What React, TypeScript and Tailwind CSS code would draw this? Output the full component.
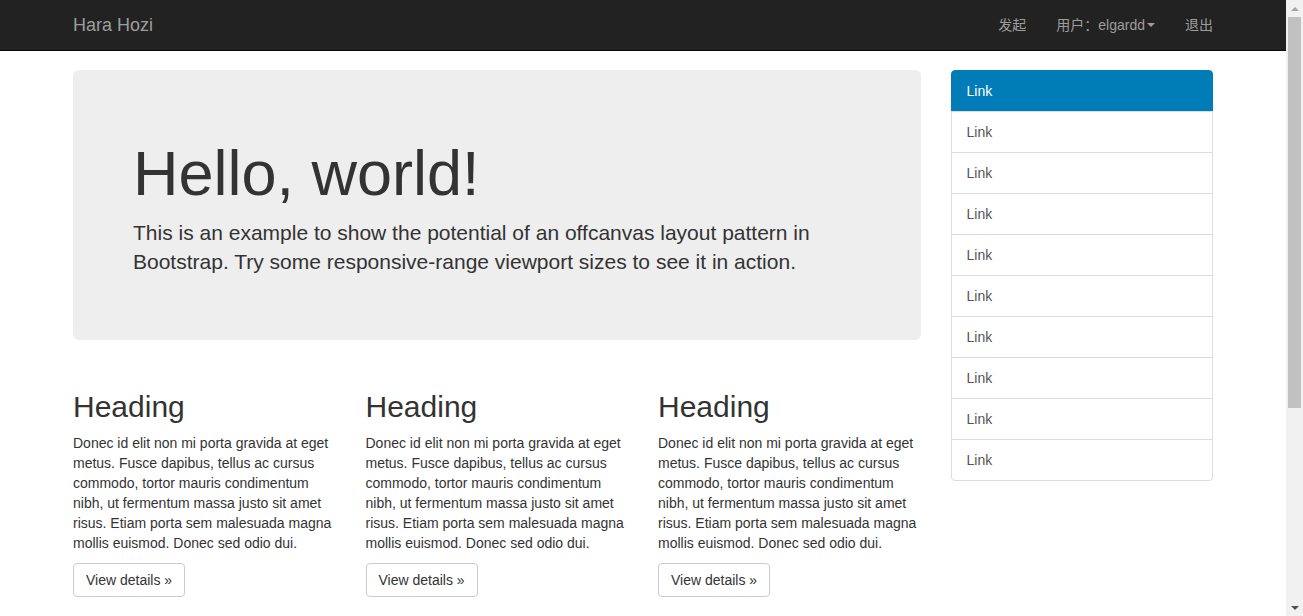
const features = [0, 1, 2];
const links = ['Link', 'Link', 'Link', 'Link', 'Link', 'Link', 'Link', 'Link', 'Link', 'Link'];

const body =
  'Donec id elit non mi porta gravida at eget metus. Fusce dapibus, tellus ac cursus commodo, tortor mauris condimentum nibh, ut fermentum massa justo sit amet risus. Etiam porta sem malesuada magna mollis euismod. Donec sed odio dui.';

function Navbar() {
  return (
    <nav className="h-[51px] bg-[#222] border-b border-[#080808]">
      <div className="w-[1170px] mx-auto px-[15px] flex items-start justify-between">
        <a className="-ml-[15px] px-[15px] py-[15px] text-[18px] leading-5 text-[#9d9d9d]">Hara Hozi</a>
        <ul className="flex -mr-[15px] text-[14px] leading-5 text-[#9d9d9d]">
          <li className="px-[15px] py-[15px]">发起</li>
          <li className="px-[15px] py-[15px] flex items-center">
            用户：elgardd
            <span className="inline-block w-0 h-0 ml-[2px] border-t-4 border-x-4 border-x-transparent border-t-[#9d9d9d]"></span>
          </li>
          <li className="px-[15px] py-[15px]">退出</li>
        </ul>
      </div>
    </nav>
  );
}

function Feature() {
  return (
    <div className="px-[15px]">
      <h2 className="mt-5 mb-[10px] text-[30px] leading-[1.1] text-[#333]">Heading</h2>
      <p className="text-[14px] leading-5 mb-[10px] text-[#333]">{body}</p>
      <p className="mb-[10px]">
        <a className="inline-block bg-white border border-[#ccc] rounded px-3 py-[6px] text-[14px] leading-5 text-[#333]">
          View details »
        </a>
      </p>
    </div>
  );
}

function Sidebar() {
  return (
    <div className="w-[292.5px] px-[15px]">
      <div className="flex flex-col">
        {links.map((l, i) => (
          <a
            key={i}
            className={
              i === 0
                ? 'block px-[15px] py-[10px] -mb-px text-[14px] leading-5 bg-[#007cb7] border border-[#007cb7] text-white rounded-t'
                : i === links.length - 1
                ? 'block px-[15px] py-[10px] text-[14px] leading-5 bg-white border border-[#ddd] text-[#555] rounded-b'
                : 'block px-[15px] py-[10px] -mb-px text-[14px] leading-5 bg-white border border-[#ddd] text-[#555]'
            }
          >
            {l}
          </a>
        ))}
      </div>
    </div>
  );
}

function Scrollbar() {
  return (
    <div className="w-[17px] h-full bg-[#f1f1f1] flex flex-col">
      <div className="h-[17px] flex items-center justify-center">
        <span className="w-0 h-0 border-b-4 border-x-4 border-x-transparent border-b-[#a3a3a3]"></span>
      </div>
      <div className="mx-[2px] h-[391px] bg-[#c1c1c1]"></div>
      <div className="flex-1"></div>
      <div className="h-[17px] flex items-center justify-center">
        <span className="w-0 h-0 border-t-4 border-x-4 border-x-transparent border-t-[#505050]"></span>
      </div>
    </div>
  );
}

export default function App() {
  return (
    <div className="h-[616px] overflow-hidden flex bg-white font-['Liberation_Sans','Noto_Sans_CJK_SC',sans-serif]">
      <div className="flex-1 min-w-0">
        <Navbar />
        <div className="w-[1170px] mx-auto px-[15px] mt-[19px]">
          <div className="flex -mx-[15px]">
            <div className="w-[877.5px] px-[15px]">
              <div className="bg-[#eee] rounded-[6px] px-[60px] py-[48px] mb-[30px] text-[#333]">
                <h1 className="mt-5 mb-[10px] text-[63px] leading-[70px]">Hello, world!</h1>
                <p className="mb-[15px] text-[21px] leading-[1.4]">
                  This is an example to show the potential of an offcanvas layout pattern in Bootstrap. Try some
                  responsive-range viewport sizes to see it in action.
                </p>
              </div>
              <div className="grid grid-cols-3 -mx-[15px]">
                {features.map((f) => (
                  <Feature key={f} />
                ))}
              </div>
            </div>
            <Sidebar />
          </div>
        </div>
      </div>
      <Scrollbar />
    </div>
  );
}
